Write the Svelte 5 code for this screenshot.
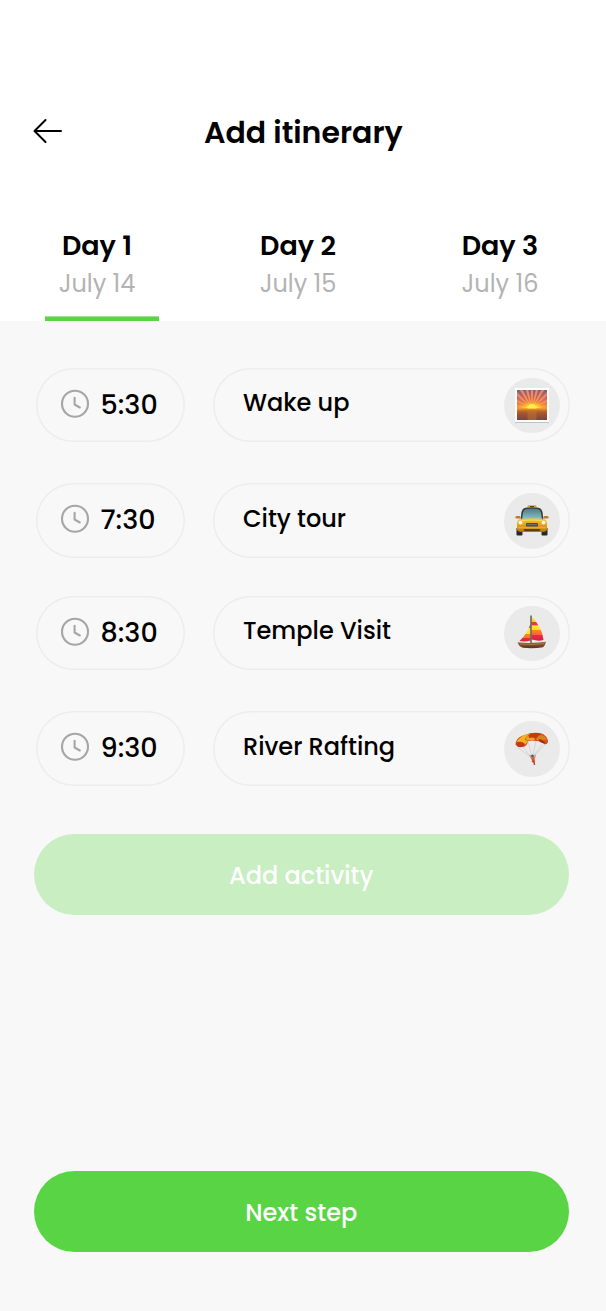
<script>
  const days = [
    { name: 'Day 1', date: 'July 14', active: true },
    { name: 'Day 2', date: 'July 15', active: false },
    { name: 'Day 3', date: 'July 16', active: false }
  ];
  const activities = [
    { time: '5:30', title: 'Wake up', icon: 'sunrise' },
    { time: '7:30', title: 'City tour', icon: 'taxi' },
    { time: '8:30', title: 'Temple Visit', icon: 'boat' },
    { time: '9:30', title: 'River Rafting', icon: 'parachute' }
  ];
  const rays = [-80, -63, -46, -30, -15, 0, 15, 30, 46, 63, 80];
</script>

<main>
  <header>
    <button class="back" aria-label="Back">
      <svg width="30" height="26" viewBox="0 0 30 26" fill="none" stroke="#000" stroke-width="2" stroke-linecap="round" stroke-linejoin="round"><path d="M28 13H1.500M12.500 2 1.500 13l11 11" /></svg>
    </button>
    <h1>Add itinerary</h1>
  </header>

  <nav>
    {#each days as d}
      <div class="tab" class:active={d.active}>
        <strong>{d.name}</strong>
        <span>{d.date}</span>
      </div>
    {/each}
  </nav>

  <section class="list">
    {#each activities as a}
      <div class="row">
        <div class="pill time">
          <svg width="30" height="30" viewBox="0 0 30 30" fill="none" stroke="#a6a6a6" stroke-width="2.1" stroke-linecap="round" stroke-linejoin="round"><circle cx="15" cy="14.700" r="13" /><path d="M14.600 8.700v6.800l5.200 3" /></svg>
          <span>{a.time}</span>
        </div>
        <div class="pill title">
          <span>{a.title}</span>
          <div class="badge">
            {#if a.icon === 'sunrise'}
              <svg width="36" height="36" viewBox="0 0 36 36">
                <defs>
                  <linearGradient id="sky" x1="0" y1="0" x2="0" y2="1"><stop offset="0" stop-color="#76607f" /><stop offset=".5" stop-color="#d66a5c" /><stop offset="1" stop-color="#ff9d2c" /></linearGradient>
                  <linearGradient id="sea" x1="0" y1="0" x2="0" y2="1"><stop offset="0" stop-color="#d9832a" /><stop offset=".4" stop-color="#a5562f" /><stop offset="1" stop-color="#7d4440" /></linearGradient>
                  <radialGradient id="ray" gradientUnits="userSpaceOnUse" cx="18" cy="21" r="20"><stop offset="0" stop-color="#ffd23a" /><stop offset=".5" stop-color="#ff9648" /><stop offset="1" stop-color="#e8806f" /></radialGradient>
                  <radialGradient id="sun"><stop offset="0" stop-color="#fffbb0" /><stop offset=".4" stop-color="#ffe53b" /><stop offset="1" stop-color="#ffad20" stop-opacity="0" /></radialGradient>
                  <clipPath id="frame"><path d="M3 3h30v18.500H3z" /></clipPath>
                </defs>
                <path d="M1 35.400h34" stroke="#b9c2c1" />
                <path fill="#fff" d="M1 1h34v34H1z" />
                <path fill="url(#sky)" d="M3 3h30v19H3z" />
                <g clip-path="url(#frame)">
                  {#each rays as r}<path fill="url(#ray)" d="M18 21.500 16.400-2h3.200z" transform="rotate({r} 18 21.500)" />{/each}
                  <ellipse cx="18" cy="21.500" rx="14" ry="7" fill="url(#sun)" />
                </g>
                <path fill="url(#sea)" d="M3 21.500h30V33H3z" />
                <path fill="#c67a31" opacity=".45" d="M13.500 22h9v11h-9z" />
                <path d="M13.500 21.700a4.500 4.700 0 0 1 9 0z" fill="#fff04a" />
                <path d="M3 22h30" stroke="#f9a222" stroke-width=".8" />
              </svg>
            {:else if a.icon === 'taxi'}
              <svg width="36" height="36" viewBox="0 0 36 36">
                <defs>
                  <linearGradient id="body" x1="0" y1="0" x2="0" y2="1"><stop offset="0" stop-color="#f1c53a" /><stop offset=".55" stop-color="#dca018" /><stop offset="1" stop-color="#b37408" /></linearGradient>
                  <linearGradient id="glass" x1="0" y1="0" x2="0" y2="1"><stop offset="0" stop-color="#55797f" /><stop offset="1" stop-color="#86c6d0" /></linearGradient>
                </defs>
                <path d="M2.500 25h6v6.500q0 1-1 1h-4q-1 0-1-1zM27.500 25h6v6.500q0 1-1 1h-4q-1 0-1-1z" fill="#26282b" />
                <path d="M13 4.500 14 2.200h8l1 2.300z" fill="#d5a92c" />
                <path d="M16 3.500h4" stroke="#5b491d" />
                <path d="M6.500 18 7.500 9q.7-3.500 4-4.200 6.500-1 13 0 3.300.7 4 4.200l1 9z" fill="#30383a" />
                <path d="M8 16.500 9 9.500q.5-3 3-3.500 6-.8 12 0 2.500.5 3 3.500l1 7z" fill="url(#glass)" />
                <path d="M5.500 16q12.500-1.500 25 0 2.500 1.500 2.500 5v6q-1 2-4 2H7q-3 0-4-2v-6q0-3.500 2.500-5z" fill="url(#body)" />
                <rect x="1.500" y="13" width="5" height="2.600" rx="1.300" fill="#c07c22" /><rect x="29.500" y="13" width="5" height="2.600" rx="1.300" fill="#c07c22" />
                <path d="M8 17.500q10-1 20 0" fill="none" stroke="#ffe362" stroke-width=".8" />
                <circle cx="6.500" cy="19.500" r="2" fill="#fff5e3" /><circle cx="29.500" cy="19.500" r="2" fill="#fff5e3" />
                <rect x="12" y="20" width="12" height="3.600" rx="1" fill="#454a49" />
                <path d="M13 21.700h10" stroke="#89908a" stroke-width=".7" />
                <path d="M9.500 26h17l-1 2h-15z" fill="#5a3f12" />
                <path d="M4 24.800h28" stroke="#f6c63d" stroke-width=".8" />
              </svg>
            {:else if a.icon === 'boat'}
              <svg width="36" height="36" viewBox="0 0 36 36">
                <defs>
                  <linearGradient id="sailR" x1="0" y1="0" x2="0" y2="1"><stop offset="0" stop-color="#ffe92b" /><stop offset=".22" stop-color="#e9d129" /><stop offset=".24" stop-color="#ee344d" /><stop offset=".36" stop-color="#ee344d" /><stop offset=".38" stop-color="#fff020" /><stop offset=".55" stop-color="#ffd824" /><stop offset=".58" stop-color="#ff8228" /><stop offset=".75" stop-color="#ff6332" /><stop offset=".78" stop-color="#e72b4d" /><stop offset="1" stop-color="#d91e42" /></linearGradient>
                  <linearGradient id="sailL" x1="0" y1="0" x2="0" y2="1"><stop offset="0" stop-color="#da334b" /><stop offset=".2" stop-color="#e33a43" /><stop offset=".23" stop-color="#f6ec27" /><stop offset=".55" stop-color="#ffe12d" /><stop offset=".58" stop-color="#ff822d" /><stop offset=".78" stop-color="#ff722d" /><stop offset=".8" stop-color="#e63443" /><stop offset="1" stop-color="#cb283d" /></linearGradient>
                  <linearGradient id="hull" x1="0" y1="0" x2="0" y2="1"><stop offset="0" stop-color="#a06b3a" /><stop offset="1" stop-color="#57331e" /></linearGradient>
                </defs>
                <path d="M17.500 1.500Q28 12 29.500 25q-5 1.500-12-.5z" fill="url(#sailR)" />
                <path d="M16.500 9Q13 19 5.500 26q6 1 11-.5z" fill="url(#sailL)" />
                <path d="M17 .5v28" stroke="#51473a" stroke-width="1.300" />
                <path d="M3.500 27.300q14 1.500 28.500-.5-.5 3-3 5.500-10 1.500-20 .5-4-1-5.500-5.500z" fill="url(#hull)" />
                <path d="M6 29q12 1.300 24-.5" fill="none" stroke="#b88450" stroke-width=".7" />
              </svg>
            {:else}
              <svg width="36" height="36" viewBox="0 0 36 36">
                <g fill="none" stroke="#c9cccd" stroke-width=".7"><path d="M3 16 17.500 26.500M9 16l8.500 10.500M14 10l4 16.500M22 10l-3.500 16.500M28 13l-9.500 13.500M33 11.500 18.500 26.500" /></g>
                <path d="M1.500 14Q1.500 7 9 4.500 19 .500 29 3q5 3 5 8-1 3-4 2-3-3.500-8-3-4-1-8 0-.5 5-5 6-6 .5-7.500-2.500z" fill="#d94c16" />
                <path d="M6 7q4-4 10-4-5 3-5 6l3 1-3 4q-2-3-8-3 0-2 3-4z" fill="#efb41f" />
                <path d="M13 5.500q7-3 13-2-4 1.500-6 6-4-1-7 0-2-1.500 0-4z" fill="#e5a622" />
                <path d="M16 2.500q7-1.500 12 .5-4 1-6 5-3-2.500-7-1-1-2 1-4.500z" fill="#c63a12" />
                <path d="M27 4q5 1 6 5-5-1-8 1l-3-1.500q1-3.500 5-4.500z" fill="#d9821b" />
                <path d="M2.500 12q4.500-3 8.500 1-1 3-5 3.200Q2 15.500 2.500 12z" fill="#c9351a" />
                <path d="M24 9q3-2 5 1l3 2.500q-5 0-8-3.500z" fill="#8f3512" />
                <circle cx="18.500" cy="25" r="1.500" fill="#52616a" />
                <path d="M16 24 17 27M21.500 24l-1 3" stroke="#d09372" stroke-width="1.200" />
                <path d="m17 26.500 3.500-.3.500 4.300-3-.5z" fill="#d85432" />
                <path d="m18 30 2 1.500M20 30l.5 4" stroke="#b94b36" stroke-width="1.500" />
              </svg>
            {/if}
          </div>
        </div>
      </div>
    {/each}
  </section>

  <button class="cta add"><span>Add activity</span></button>
  <button class="cta next"><span>Next step</span></button>
</main>

<style>
  :global(body) { background: #f8f8f8; }
  main { width: 606px; height: 1311px; box-sizing: border-box; background: #f8f8f8; font-family: Poppins, Inter, "Open Sans", sans-serif; color: #000; display: flex; flex-direction: column; overflow: hidden; }
  button { border: 0; padding: 0; background: none; font: inherit; }
  span, strong, h1 { white-space: nowrap; }
  header { height: 216px; flex: none; background: #fff; display: grid; grid-template-columns: 204px 1fr; align-items: start; box-sizing: border-box; padding-top: 112px; }
  .back { width: 30px; height: 26px; margin: 6px 0 0 33px; }
  svg { display: block; flex: none; }
  h1 { margin: 1px 0 0; font-size: 30px; line-height: 40px; font-weight: 600; }
  nav { height: 105px; flex: none; background: #fff; display: grid; grid-template-columns: 194px 208px 196px; }
  .tab { display: flex; flex-direction: column; align-items: center; padding-top: 12px; }
  .tab strong { font-size: 27px; line-height: 36px; font-weight: 600; }
  .tab span { font-size: 24px; line-height: 36px; color: #b3b3b3; font-weight: 400; margin-top: 2px; }
  .tab.active::after { content: ""; width: 114px; height: 4px; border-top: 1px solid #9be58f; background: #59d444; margin-top: auto; margin-left: 10px; }
  .list { padding: 46.500px 36px 0; display: flex; flex-direction: column; gap: 41px; flex: none; }
  .row { display: grid; grid-template-columns: 148.500px 357px; gap: 28.500px; height: 74.500px; }
  .row:nth-child(3) { margin-top: -3px; }
  .pill { box-shadow: inset 0 0 0 1.500px #ededed; border-radius: 38px; box-sizing: border-box; display: flex; align-items: center; height: 74.500px; }
  .time { padding: 0 0 2px 24px; gap: 11px; font-size: 27px; font-weight: 500; }
  .time span { padding-top: 2px; margin-left: -.5px; }
  .title { padding: 0 10.500px 0 30px; justify-content: space-between; font-size: 24px; font-weight: 500; }
  .title span { padding-bottom: 4px; }
  .badge { width: 55.500px; height: 55.500px; margin-top: 1px; border-radius: 50%; background: #eaeaea; display: grid; place-items: center; }
  .cta { height: 81px; width: 534.500px; margin-left: 34px; border-radius: 41px; color: #fff; font-size: 24px; font-weight: 500; flex: none; }
  .cta span { position: relative; top: 1px; }
  .add { background: #c8eec2; margin-top: 48px; }
  .next { background: #59d444; margin-top: 256.500px; }
</style>
